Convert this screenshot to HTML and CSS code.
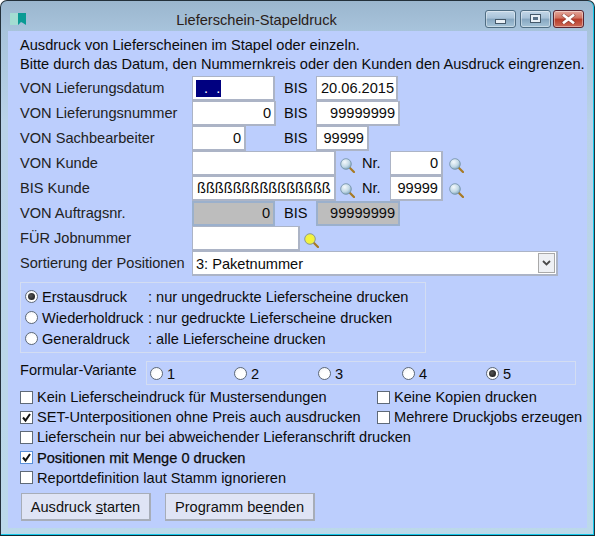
FILE: index.html
```html
<!DOCTYPE html>
<html lang="de">
<head>
<meta charset="utf-8">
<title>Lieferschein-Stapeldruck</title>
<link rel="stylesheet" href="styles.css">
</head>
<body>
<svg class="defs" width="0" height="0" aria-hidden="true">
  <defs>
    <radialGradient id="lens" cx="38%" cy="32%" r="72%">
      <stop offset="0" stop-color="#f4f9fc"/>
      <stop offset="0.6" stop-color="#c3d9e6"/>
      <stop offset="1" stop-color="#7fa6bc"/>
    </radialGradient>
    <radialGradient id="lensy" cx="50%" cy="50%" r="60%">
      <stop offset="0" stop-color="#f8f830"/>
      <stop offset="0.7" stop-color="#efef48"/>
      <stop offset="1" stop-color="#b8c080"/>
    </radialGradient>
    <symbol id="mag" viewBox="0 0 15 15">
      <path d="M9.5 9.5L14 14" stroke="#a87a24" stroke-width="2.2" stroke-linecap="round"/>
      <circle cx="6" cy="6" r="5.3" fill="url(#lens)" stroke="#6f8ea3" stroke-width="0.8"/>
    </symbol>
    <symbol id="magy" viewBox="0 0 15 15">
      <path d="M9.5 9.5L14 14" stroke="#a87a24" stroke-width="2.2" stroke-linecap="round"/>
      <circle cx="6" cy="6" r="5.3" fill="url(#lensy)" stroke="#7f8f80" stroke-width="0.8"/>
    </symbol>
  </defs>
</svg>
<div class="window">
  <header class="titlebar">
    <svg class="appicon" width="16" height="12" viewBox="0 0 16 12"><path d="M0 0h8v12H0z" fill="#a3dcd2"/><path d="M8 0h8v12l-3-2-2-1-3 3z" fill="#0a9a94"/></svg>
    <span class="title">Lieferschein-Stapeldruck</span>
    <div class="caption">
      <span class="capbtn"><i class="minglyph"></i></span>
      <span class="capbtn mid"><i class="maxglyph"></i></span>
      <span class="capbtn close"><svg width="15" height="10" viewBox="0 0 15 10"><path d="M3 1.5l9 7M12 1.5l-9 7" stroke="#5a2a2a" stroke-width="4" stroke-linecap="square" opacity=".45"/><path d="M3 1.5l9 7M12 1.5l-9 7" stroke="#fff" stroke-width="2.6" stroke-linecap="square"/></svg></span>
    </div>
  </header>
  <main class="client">
    <p class="intro">Ausdruck von Lieferscheinen im Stapel oder einzeln.</p>
    <p class="intro second">Bitte durch das Datum, den Nummernkreis oder den Kunden den Ausdruck eingrenzen.</p>

    <div class="row">
      <label class="lbl">VON Lieferungsdatum</label>
      <div class="slot"><span class="field w83 datefield"><span class="sel">&nbsp;&nbsp;.&nbsp;&nbsp;.</span></span></div>
      <span class="bis">BIS</span>
      <span class="field w82">20.06.2015</span>
    </div>
    <div class="row">
      <label class="lbl">VON Lieferungsnummer</label>
      <div class="slot"><span class="field w84 num">0</span></div>
      <span class="bis">BIS</span>
      <span class="field w84 num">99999999</span>
    </div>
    <div class="row">
      <label class="lbl">VON Sachbearbeiter</label>
      <div class="slot"><span class="field w54 num">0</span></div>
      <span class="bis">BIS</span>
      <span class="field w53 num">99999</span>
    </div>
    <div class="row">
      <label class="lbl">VON Kunde</label>
      <span class="field w144"></span>
      <svg class="mag"><use href="#mag"/></svg>
      <span class="nr">Nr.</span>
      <span class="field w53 num">0</span>
      <svg class="mag after"><use href="#mag"/></svg>
    </div>
    <div class="row">
      <label class="lbl">BIS Kunde</label>
      <span class="field w144">ßßßßßßßßßßßßßßß</span>
      <svg class="mag"><use href="#mag"/></svg>
      <span class="nr">Nr.</span>
      <span class="field w53 num">99999</span>
      <svg class="mag after"><use href="#mag"/></svg>
    </div>
    <div class="row">
      <label class="lbl">VON Auftragsnr.</label>
      <div class="slot"><span class="field w83 num off">0</span></div>
      <span class="bis">BIS</span>
      <span class="field w84 num off">99999999</span>
    </div>
    <div class="row">
      <label class="lbl">FÜR Jobnummer</label>
      <span class="field w108"></span>
      <svg class="mag"><use href="#magy"/></svg>
    </div>
    <div class="row">
      <label class="lbl">Sortierung der Positionen</label>
      <span class="field w366 combo">3: Paketnummer
        <span class="drop"><svg width="9" height="6" viewBox="0 0 9 6"><path d="M1 1l3.5 3.5L8 1" fill="none" stroke="#4a4a4a" stroke-width="1.8"/></svg></span>
      </span>
    </div>

    <fieldset class="group modes">
      <div class="opt"><i class="radio on"></i><span class="modename">Erstausdruck</span><span>: nur ungedruckte Lieferscheine drucken</span></div>
      <div class="opt"><i class="radio"></i><span class="modename">Wiederholdruck</span><span>: nur gedruckte Lieferscheine drucken</span></div>
      <div class="opt"><i class="radio"></i><span class="modename">Generaldruck</span><span>: alle Lieferscheine drucken</span></div>
    </fieldset>

    <div class="variant">
      <span class="varlabel">Formular-Variante</span>
      <fieldset class="group variants">
        <div class="vopt"><i class="radio"></i>1</div>
        <div class="vopt"><i class="radio"></i>2</div>
        <div class="vopt"><i class="radio"></i>3</div>
        <div class="vopt"><i class="radio"></i>4</div>
        <div class="vopt"><i class="radio on"></i>5</div>
      </fieldset>
    </div>

    <div class="checks">
      <div class="chk"><i class="box"></i><span class="chkwide">Kein Lieferscheindruck für Mustersendungen</span><i class="box"></i><span>Keine Kopien drucken</span></div>
      <div class="chk"><i class="box tick"><svg width="11" height="11" viewBox="0 0 11 11"><path d="M2 5.5l2.5 3L9 2" fill="none" stroke="#111" stroke-width="2"/></svg></i><span class="chkwide">SET-Unterpositionen ohne Preis auch ausdrucken</span><i class="box"></i><span>Mehrere Druckjobs erzeugen</span></div>
      <div class="chk"><i class="box"></i><span>Lieferschein nur bei abweichender Lieferanschrift drucken</span></div>
      <div class="chk"><i class="box focus tick"><svg width="11" height="11" viewBox="0 0 11 11"><path d="M2 5.5l2.5 3L9 2" fill="none" stroke="#111" stroke-width="2"/></svg></i><span class="strong">Positionen mit Menge 0 drucken</span></div>
      <div class="chk"><i class="box"></i><span>Reportdefinition laut Stamm ignorieren</span></div>
    </div>

    <div class="buttons">
      <button class="btn b1" type="button">Ausdruck <u>s</u>tarten</button>
      <button class="btn b2" type="button">Programm be<u>e</u>nden</button>
    </div>
  </main>
</div>
</body>
</html>
```
FILE: styles.css
```css
* { box-sizing: border-box; }
html, body { margin: 0; padding: 0; }
body {
  width: 595px;
  height: 536px;
  overflow: hidden;
  background: #fff;
  font-family: "Liberation Sans", Arial, sans-serif;
  font-size: 14.6px;
  color: #0b0b0b;
}
.defs { position: absolute; }
p { margin: 0; }
i { font-style: normal; display: block; flex: none; }

.window {
  width: 595px;
  height: 536px;
  display: flex;
  flex-direction: column;
  border: 1px solid #23303a;
  border-bottom-color: #0d2a33;
  border-radius: 7px 7px 0 0;
  background: linear-gradient(to bottom, #9bb6ce 0, #a8c4dc 31px, #b9d2e8 120px, #bcd9ea 100%);
  box-shadow: inset 0 -1px 0 #14c8ea, inset -1px 0 0 #14c8ea;
}
.titlebar {
  height: 30px;
  flex: none;
  position: relative;
  display: flex;
  align-items: center;
  justify-content: center;
}
.appicon { position: absolute; left: 9px; top: 12px; }
.title { margin-top: 8px; color: #2a2018; position: relative; left: -41px; }
.caption { position: absolute; right: 10px; top: 9px; display: flex; }
.capbtn {
  width: 31px;
  height: 18px;
  display: flex;
  align-items: center;
  justify-content: center;
  border: 1px solid #4f6d83;
  border-radius: 3px;
  background: linear-gradient(to bottom, #c3d7e8 0, #a8c2d8 45%, #86a6c0 50%, #a6c4d8 100%);
  box-shadow: inset 0 0 0 1px rgba(255,255,255,.4);
}
.capbtn.mid { margin-left: 4px; }
.capbtn.close {
  margin-left: 2px;
  border-color: #5b2430;
  background: linear-gradient(to bottom, #e4a79c 0, #d0705e 45%, #b83a28 50%, #cc6a58 100%);
}
.minglyph { width: 11px; height: 5px; margin-top: 5px; background: #e9f0f6; border: 1px solid #45596a; }
.maxglyph { width: 9px; height: 7px; border: 2px solid #e9f0f6; background: #5a7288; box-shadow: 0 0 0 1px #45596a; margin-top: -1px; }

.client {
  margin: 0 7px 7px 7px;
  flex: 1;
  background: #bccefd;
  padding: 4px 0 0 12px;
  display: flex;
  flex-direction: column;
}
.intro { line-height: 20px; height: 19px; }
.second { height: 22px; white-space: nowrap; }

.row { display: flex; align-items: center; height: 25px; }
.lbl { width: 172px; flex: none; color: #222; margin-top: -2px; }
.slot { width: 92px; flex: none; }
.bis { width: 32px; flex: none; margin-top: -2px; }
.nr { width: 28px; flex: none; margin: -2px 0 0 7px; }
.field {
  height: 25px;
  display: block;
  flex: none;
  background: #fff;
  border: 2px solid #acb4c6;
  border-width: 1px 2px 2px 1px;
  padding: 0 4px;
  line-height: 23px;
  white-space: nowrap;
  overflow: hidden;
}
.w82 { width: 82px; }
.w83 { width: 83px; }
.w84 { width: 84px; }
.w53 { width: 53px; }
.w54 { width: 54px; }
.w108 { width: 108px; }
.w144 { width: 144px; }
.w366 { width: 366px; }
.num { text-align: right; padding-right: 3px; }
.off { background: #bdbdbd; border: 2px solid #9bb0cc; line-height: 21px; }
.datefield { padding-left: 3px; }
.sel { display: block; height: 17px; line-height: 16px; background: #000080; color: #fff; width: 25px; margin-top: 3px; }
.mag { width: 15px; height: 15px; flex: none; margin: 3px 0 0 4px; }
.mag.after { margin-left: 6px; }
.combo { position: relative; padding-left: 3px; line-height: 24px; }
.drop {
  position: absolute; right: 1px; top: 1px; width: 17px; height: 20px;
  background: #eef0f4; border: 1px solid #a9a9a9;
  display: flex; align-items: center; justify-content: center;
}

.group { border: 1px solid #d3ddf2; margin: 0; padding: 0; }
.modes { width: 406px; height: 71px; margin-top: 6px; padding: 3px 0 0 4px; flex: none; }
.opt { display: flex; align-items: center; height: 21px; }
.radio {
  width: 13px; height: 13px; border-radius: 50%;
  background: radial-gradient(circle at 60% 65%, #fff 40%, #eceef2 100%);
  border: 1px solid #5f6a78;
  margin-right: 4px;
  position: relative;
}
.radio.on::after {
  content: "";
  position: absolute; left: 2px; top: 2px; width: 7px; height: 7px; border-radius: 50%;
  background: radial-gradient(circle at 40% 40%, #555, #111);
}
.modename { width: 106px; flex: none; }
.opt .modename + span { white-space: nowrap; }

.variant { display: flex; align-items: flex-start; margin-top: 8px; flex: none; }
.varlabel { width: 126px; flex: none; line-height: 16px; padding-top: 1px; }
.variants { width: 430px; height: 24px; display: flex; align-items: center; padding: 1px 0 0 3px; }
.vopt { width: 84px; flex: none; display: flex; align-items: center; }
.vopt .radio { margin-right: 4px; }

.checks { margin-top: 2px; flex: none; }
.chk { display: flex; align-items: center; height: 20.2px; }
.box {
  width: 13px; height: 13px; background: #fff; border: 1px solid #5f6a78; margin-right: 4px;
  display: flex; align-items: center; justify-content: center;
}
.box.focus { border-color: #5a8fd8; }
.chkwide { width: 340px; flex: none; }
.strong { -webkit-text-stroke: 0.25px #0b0b0b; }

.buttons { display: flex; gap: 14px; margin: 5px 0 0 1px; }
.btn {
  height: 28px;
  font: inherit;
  color: #111;
  background: #dfe4f5;
  border: 1px solid #a7adb8;
  border-width: 1px 2px 2px 1px;
  padding: 1px 0 0;
}
.b1 { width: 130px; }
.b2 { width: 150px; }
```
